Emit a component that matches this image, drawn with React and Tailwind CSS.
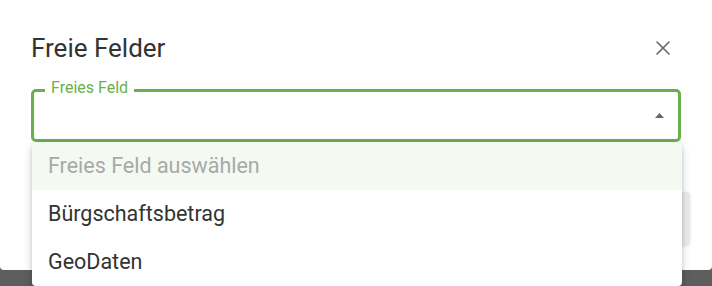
import { X } from 'lucide-react'

const items = ['Bürgschaftsbetrag', 'GeoDaten']

export default function App() {
  return (
    <div className="relative w-[712px] h-[286px] overflow-hidden bg-[#5e5e5e]" style={{ fontFamily: 'Roboto, "Noto Sans", sans-serif' }}>
      {/* Dialog */}
      <div className="h-[270px] bg-white rounded-b-[4px] px-[31px] pt-[30px]">
        <div className="flex items-center justify-between h-[36px]">
          <h2 className="text-[26px] text-[#333333] font-normal leading-none">Freie Felder</h2>
          <X className="w-[24px] h-[24px] text-[#666666] mr-[6px]" strokeWidth={1.6} />
        </div>

        {/* Select */}
        <div className="relative mt-[23px] h-[53px] rounded-[5px] border-[3px] border-[#6ab04c]">
          <span className="absolute -top-[14px] left-[11px] px-[6px] bg-white text-[16px] leading-[20px] text-[#6ab04c]">
            Freies Feld
          </span>
          <svg className="absolute right-[14px] top-[21px]" width="9" height="5" viewBox="0 0 9 5">
            <path d="M0 5 L4.5 0 L9 5 Z" fill="#666666" />
          </svg>
        </div>

        {/* content behind menu */}
        <div className="flex justify-end mt-[50px] -mr-[9px]">
          <div className="w-[120px] h-[53px] rounded-[4px] bg-[#ebebeb] shadow-[0_1px_3px_rgba(0,0,0,0.12)]" />
        </div>
      </div>

      {/* Dropdown menu */}
      <div className="absolute left-[32px] top-[142px] w-[650px] bg-white rounded-[4px] shadow-[0_5px_10px_rgba(0,0,0,0.18),0_2px_4px_rgba(0,0,0,0.12)] overflow-hidden">
        <div className="h-[48px] flex items-center px-[16px] bg-[#f4f9f2] text-[21.5px] text-[#a9a9a9]">
          Freies Feld auswählen
        </div>
        {items.map((item) => (
          <div key={item} className="h-[48px] flex items-center px-[16px] text-[21.5px] text-[#333333]">
            {item}
          </div>
        ))}
      </div>
    </div>
  )
}
